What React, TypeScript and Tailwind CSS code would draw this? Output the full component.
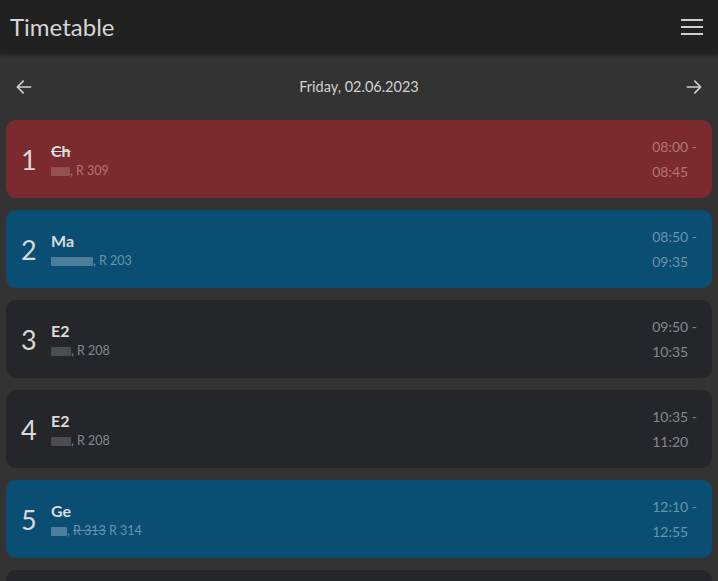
import React from "react";

type Lesson = {
  n: number;
  subject: string;
  cancelled?: boolean;
  blurW: number;
  room: React.ReactNode;
  from: string;
  to: string;
  variant: "red" | "blue" | "dark";
};

const lessons: Lesson[] = [
  { n: 1, subject: "Ch", cancelled: true, blurW: 19, room: "R 309", from: "08:00", to: "08:45", variant: "red" },
  { n: 2, subject: "Ma", blurW: 42, room: "R 203", from: "08:50", to: "09:35", variant: "blue" },
  { n: 3, subject: "E2", blurW: 20, room: "R 208", from: "09:50", to: "10:35", variant: "dark" },
  { n: 4, subject: "E2", blurW: 20, room: "R 208", from: "10:35", to: "11:20", variant: "dark" },
  {
    n: 5,
    subject: "Ge",
    blurW: 16,
    room: (
      <>
        <span className="line-through">R 313</span> R 314
      </>
    ),
    from: "12:10",
    to: "12:55",
    variant: "blue",
  },
];

const bgFor = {
  red: "bg-[#7b2b2e]",
  blue: "bg-[#0b4e74]",
  dark: "bg-[#25262a]",
};
const subFor = {
  red: "text-[#b07679]",
  blue: "text-[#6a93ab]",
  dark: "text-[#85868a]",
};
const blurFor = {
  red: "bg-[#9a5a5d]",
  blue: "bg-[#5d8aa5]",
  dark: "bg-[#56575b]",
};

function Card({ l }: { l: Lesson }) {
  return (
    <div className={`${bgFor[l.variant]} rounded-[10px] h-[78px] shrink-0 flex items-center pl-[15px] pr-[15px]`}>
      <div className="w-[30px] text-[27px] leading-none text-[#d9d9d9]">{l.n}</div>
      <div className="flex-1 flex flex-col pt-[2px]">
        <div className={`text-[16px] leading-[22px] font-bold text-[#dcdcdc] ${l.cancelled ? "line-through" : ""}`}>
          {l.subject}
        </div>
        <div className={`flex items-center text-[12.5px] leading-[18px] ${subFor[l.variant]}`}>
          <span className={`inline-block h-[9px] ${blurFor[l.variant]} opacity-80 rounded-[1px]`} style={{ width: l.blurW }} />
          <span>, {l.room}</span>
        </div>
      </div>
      <div className={`text-[14px] leading-[25px] ${subFor[l.variant]} text-left`}>
        <div>{l.from} -</div>
        <div>{l.to}</div>
      </div>
    </div>
  );
}

export default function App() {
  return (
    <div className="w-[718px] h-[581px] overflow-hidden bg-[#333333] flex flex-col" style={{ fontFamily: "'Source Sans Pro', Lato, 'Noto Sans', sans-serif" }}>
      <div className="h-[54px] shrink-0 bg-[#212121] flex items-center justify-between pl-[10px] pr-[14px] shadow-[0_1px_3px_rgba(0,0,0,0.4)]">
        <div className="text-[24px] text-[#d6d6d6] leading-none">Timetable</div>
        <svg width="24" height="18" viewBox="0 0 24 18" className="text-[#d0d0d0]">
          <path d="M1 2h22M1 9h22M1 16h22" stroke="currentColor" strokeWidth="2" />
        </svg>
      </div>
      <div className="h-[66px] shrink-0 flex items-center justify-between px-[14px]">
        <svg width="20" height="20" viewBox="0 0 24 24" fill="none" stroke="#d0d0d0" strokeWidth="2" strokeLinecap="round" strokeLinejoin="round">
          <path d="M20 12H4M11 5l-7 7 7 7" />
        </svg>
        <div className="text-[14.5px] text-[#d2d2d2]">Friday, 02.06.2023</div>
        <svg width="20" height="20" viewBox="0 0 24 24" fill="none" stroke="#d0d0d0" strokeWidth="2" strokeLinecap="round" strokeLinejoin="round">
          <path d="M4 12h16M13 5l7 7-7 7" />
        </svg>
      </div>
      <div className="flex flex-col gap-[12px] px-[6px]">
        {lessons.map((l) => (
          <Card key={l.n} l={l} />
        ))}
        <div className="bg-[#25262a] rounded-[10px] h-[78px] shrink-0" />
      </div>
    </div>
  );
}
